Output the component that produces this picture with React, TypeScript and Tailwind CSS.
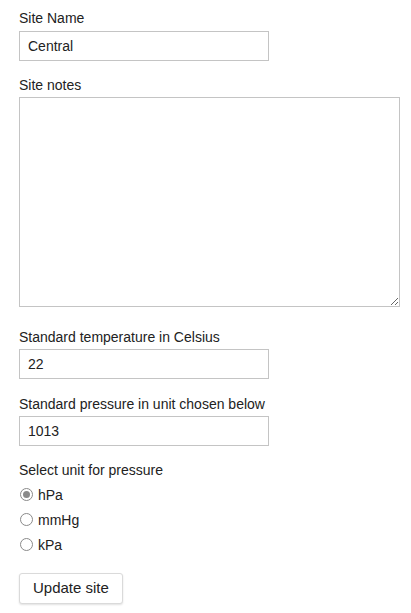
import React, { useState } from 'react';

const units = ['hPa', 'mmHg', 'kPa'];

export default function App() {
    const [unit, setUnit] = useState('hPa');

    return (
        <div className="min-h-[613px] bg-white pl-[19px] pt-[10px] text-[14px] text-[#222] font-['Liberation_Sans',Arial,sans-serif]">
            <form className="flex flex-col items-start" onSubmit={(e) => e.preventDefault()}>
                <label className="leading-[16px] mb-[5px]">Site Name</label>
                <input
                    defaultValue="Central"
                    className="w-[250px] h-[30px] border border-[#c4c4c4] px-[8px] text-[14px] outline-none"
                />

                <label className="leading-[16px] mt-[16px] mb-[4px]">Site notes</label>
                <textarea className="block w-[381px] h-[210px] border border-[#c4c4c4] outline-none resize" />

                <label className="leading-[16px] mt-[22px] mb-[4px]">Standard temperature in Celsius</label>
                <input
                    defaultValue="22"
                    className="w-[250px] h-[30px] border border-[#c4c4c4] px-[8px] text-[14px] outline-none"
                />

                <label className="leading-[16px] mt-[17px] mb-[4px]">Standard pressure in unit chosen below</label>
                <input
                    defaultValue="1013"
                    className="w-[250px] h-[30px] border border-[#c4c4c4] px-[8px] text-[14px] outline-none"
                />

                <label className="leading-[16px] mt-[16px] mb-[4px]">Select unit for pressure</label>
                {units.map((u) => (
                    <div
                        key={u}
                        className="h-[25px] flex items-center cursor-pointer"
                        onClick={() => setUnit(u)}
                    >
                        <span className="ml-[1px] w-[13px] h-[13px] rounded-full border border-[#8a8a8a] flex items-center justify-center">
                            {unit === u && <span className="w-[7px] h-[7px] rounded-full bg-[#8a8a8a]" />}
                        </span>
                        <span className="ml-[5px] leading-[16px]">{u}</span>
                    </div>
                ))}

                <button
                    type="submit"
                    className="mt-[16px] h-[31px] px-[13px] bg-white border border-[#dadada] rounded-[3px] shadow-[0_1px_2px_rgba(0,0,0,0.12)] text-[15px] text-[#222]"
                >
                    Update site
                </button>
            </form>
        </div>
    );
}
